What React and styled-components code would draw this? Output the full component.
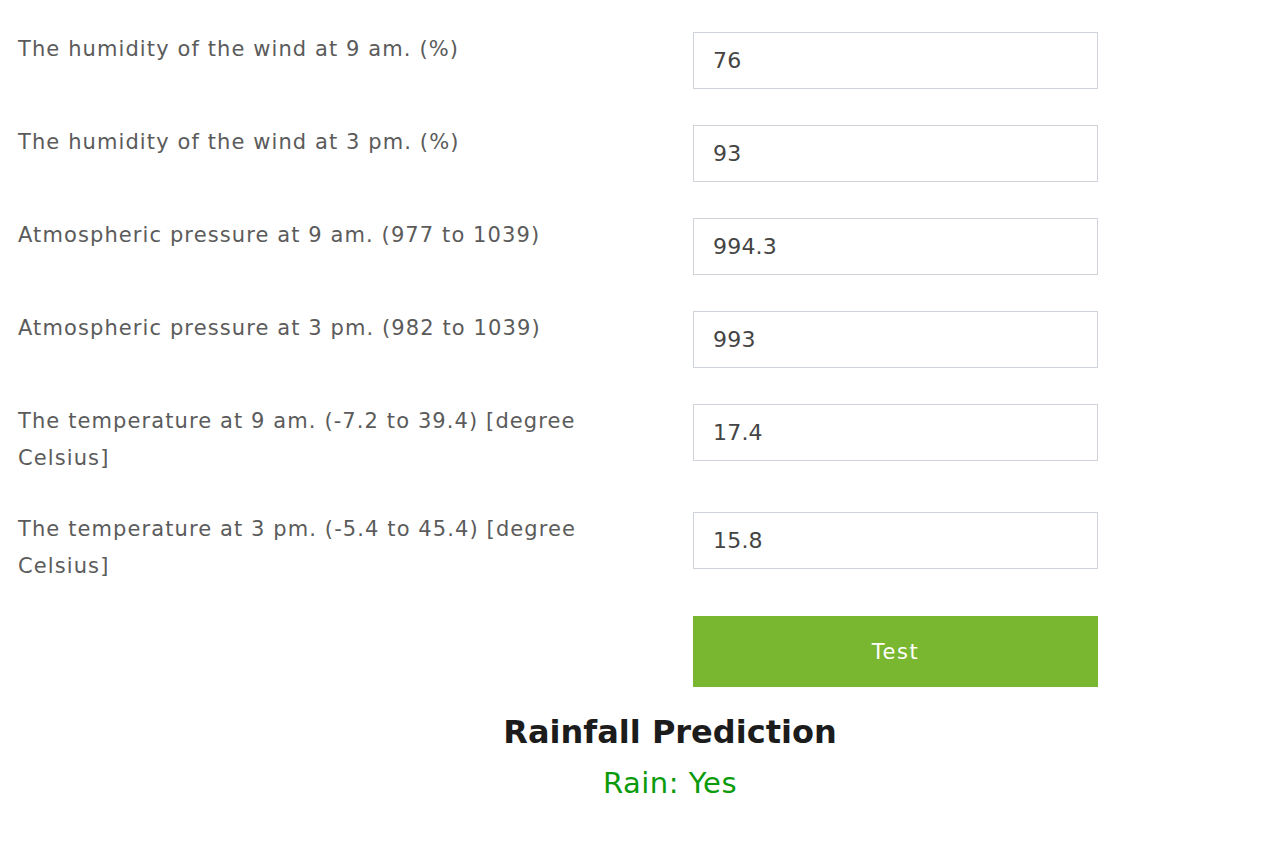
import styled, { createGlobalStyle } from "styled-components";

const GlobalStyle = createGlobalStyle`
  body {
    margin: 0;
    background: #fff;
    font-family: "DejaVu Sans", "Open Sans", sans-serif;
  }
`;

const fields = [
  { label: "The humidity of the wind at 9 am. (%)", value: "76" },
  { label: "The humidity of the wind at 3 pm. (%)", value: "93" },
  { label: "Atmospheric pressure at 9 am. (977 to 1039)", value: "994.3" },
  { label: "Atmospheric pressure at 3 pm. (982 to 1039)", value: "993" },
  { label: "The temperature at 9 am. (-7.2 to 39.4) [degree Celsius]", value: "17.4" },
  { label: "The temperature at 3 pm. (-5.4 to 45.4) [degree Celsius]", value: "15.8" },
];

export default function App() {
  return (
    <>
      <GlobalStyle />
      <Page>
        <Form onSubmit={(e) => e.preventDefault()}>
          {fields.map((f) => (
            <Row key={f.label}>
              <Label>{f.label}</Label>
              <Input type="text" defaultValue={f.value} />
            </Row>
          ))}
          <Row>
            <span />
            <Button type="submit">Test</Button>
          </Row>
        </Form>
        <Result>
          <Title>Rainfall Prediction</Title>
          <Answer>Rain: Yes</Answer>
        </Result>
      </Page>
    </>
  );
}

const Page = styled.div`
  padding: 31px 0 40px 18px;
`;

const Form = styled.form`
  display: flex;
  flex-direction: column;
  gap: 35px;
  width: 1080px;
`;

const Row = styled.div`
  display: grid;
  grid-template-columns: 610px 405px;
  column-gap: 65px;
  align-items: start;
`;

const Label = styled.label`
  font-size: 21px;
  line-height: 36.5px;
  letter-spacing: 1.1px;
  color: #5b5b5b;
`;

const Input = styled.input`
  box-sizing: border-box;
  width: 405px;
  height: 57px;
  margin-top: 1px;
  padding: 0 19px;
  border: 1px solid #cfd4da;
  border-radius: 0;
  font-family: "DejaVu Sans", sans-serif;
  font-size: 22px;
  letter-spacing: 0.2px;
  color: #444;
  outline: none;
`;

const Button = styled.button`
  margin-top: -3px;
  width: 405px;
  height: 71px;
  border: none;
  background: #7ab730;
  color: #fff;
  font-family: "DejaVu Sans", sans-serif;
  font-size: 21px;
  letter-spacing: 1.5px;
  cursor: pointer;
`;

const Result = styled.div`
  display: flex;
  flex-direction: column;
  align-items: center;
  width: 1304px;
  margin-top: 22px;
`;

const Title = styled.h2`
  margin: 0;
  font-size: 32px;
  font-weight: 700;
  color: #1c1c1c;
  line-height: 46px;
`;

const Answer = styled.div`
  margin-top: 8px;
  font-size: 29px;
  letter-spacing: 0.5px;
  color: #0a9a0a;
  line-height: 40px;
`;
